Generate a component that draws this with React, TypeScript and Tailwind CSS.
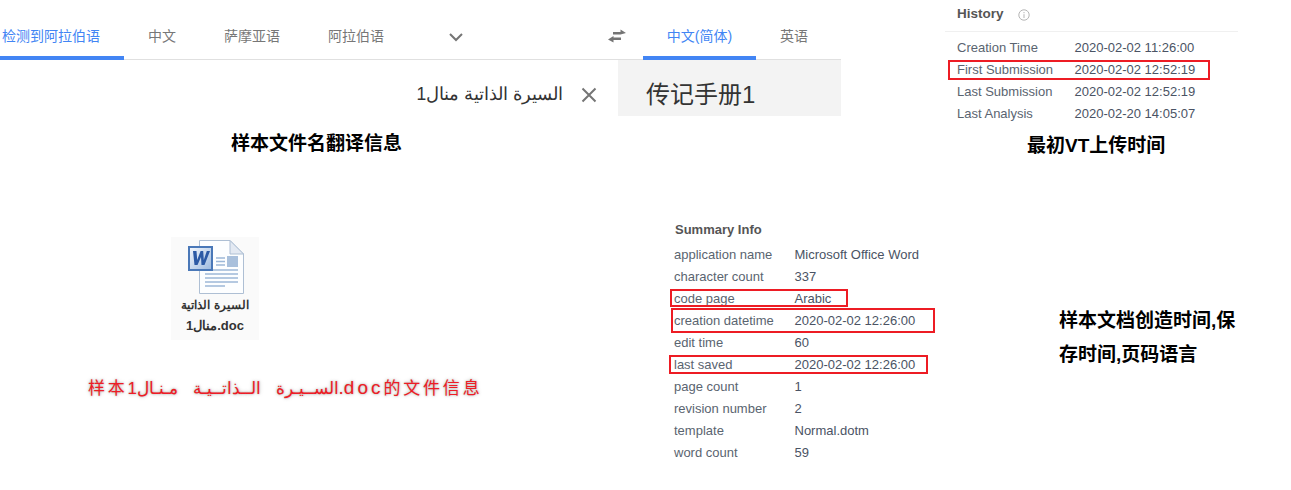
import React from 'react';

const arial = 'font-["Liberation_Sans","Noto_Sans_CJK_SC",sans-serif]';

const summaryRows: [string, string, number?][] = [
  ['application name', 'Microsoft Office Word'],
  ['character count', '337'],
  ['code page', 'Arabic', 1],
  ['creation datetime', '2020-02-02 12:26:00', 2],
  ['edit time', '60'],
  ['last saved', '2020-02-02 12:26:00', 3],
  ['page count', '1'],
  ['revision number', '2'],
  ['template', 'Normal.dotm'],
  ['word count', '59'],
];

const historyRows: [string, string, boolean?][] = [
  ['Creation Time', '2020-02-02 11:26:00'],
  ['First Submission', '2020-02-02 12:52:19', true],
  ['Last Submission', '2020-02-02 12:52:19'],
  ['Last Analysis', '2020-02-20 14:05:07'],
];

const WordIcon: React.FC = () => (
  <svg width="60" height="58" viewBox="0 0 60 58" className="ml-[3px] block">
    <defs>
      <linearGradient id="badge" x1="0" y1="0" x2="1" y2="1">
        <stop offset="0" stopColor="#f2f6fc" />
        <stop offset="1" stopColor="#9fbce0" />
      </linearGradient>
    </defs>
    <path d="M12.5 2.5H43L56.5 16V55.5H12.5Z" fill="#fdfeff" stroke="#aebfd4" />
    <path d="M43 2.5V16H56.5Z" fill="#e3e9f2" stroke="#aebfd4" />
    <rect x="40" y="18" width="11" height="11" fill="#a9c0dc" />
    <path d="M29 20H38M29 23.5H38M29 27H38M18 32H51M18 36H51M18 40H51M18 44H51M18 48H38" stroke="#9db8d8" strokeWidth="1.3" />
    <rect x="1" y="8" width="25" height="25" fill="#4a78b8" />
    <rect x="3" y="10" width="21" height="21" fill="url(#badge)" />
    <path d="M6 13L7.5 27H10.5L14 19L14.5 27H17.5L23 13H19.8L16.8 22L16.2 13H13.6L10.2 22L9.5 13Z" fill="#2c5aa5" />
  </svg>
);

const SwapIcon: React.FC = () => (
  <svg width="18" height="14" viewBox="0 0 18 14" fill="#757575" className="block">
    <path d="M5 3H12.5V0.5L18 4L12.5 5.5H5Z" />
    <path d="M13 8.5H5.5V7L0 10.5L5.5 13.5V11H13Z" />
  </svg>
);

const Tab: React.FC<{ label: string; className: string; active?: boolean }> = ({ label, className, active }) => (
  <div className={`flex h-[60px] items-center justify-center border-b-[4px] pt-[15px] text-sm ${className} ${active ? 'border-[#4285f4] text-[#4285f4]' : 'border-transparent text-[#777777]'}`}>
    {label}
  </div>
);

export default function App() {
  return (
    <div className={`flex h-[490px] w-[1291px] overflow-hidden bg-white ${arial}`}>
      <div className="w-[945px] shrink-0">
        <div className="w-[841px]">
          <div className="relative flex h-[60px] items-start">
            <div className="absolute inset-x-0 bottom-0 h-[1px] bg-[#e0e0e0]" />
            <Tab label="检测到阿拉伯语" className="relative w-[124px] pr-[22px]" active />
            <Tab label="中文" className="ml-[24px] w-[28px]" />
            <Tab label="萨摩亚语" className="ml-[48px] w-[56px]" />
            <Tab label="阿拉伯语" className="ml-[48px] w-[56px]" />
            <svg width="14" height="9" viewBox="0 0 14 9" className="ml-[65px] mt-[33px]">
              <path d="M1 1L7 7L13 1" fill="none" stroke="#757575" strokeWidth="2" />
            </svg>
            <div className="ml-[145px] mt-[29px]">
              <SwapIcon />
            </div>
            <Tab label="中文(简体)" className="relative ml-[17px] w-[113px]" active />
            <Tab label="英语" className="ml-[24px] w-[28px]" />
          </div>
          <div className="flex h-[56px]">
            <div className="flex w-[618px] items-center justify-end pt-[12px]">
              <span className="text-[17.5px] text-[#333333]">السيرة الذاتية منال1</span>
              <svg width="16" height="16" viewBox="0 0 16 16" className="ml-[18px] mr-[21px] mt-[1px]">
                <path d="M1.5 1.5L14.5 14.5M14.5 1.5L1.5 14.5" stroke="#757575" strokeWidth="2" />
              </svg>
            </div>
            <div className="flex-1 bg-[#f3f3f3] pl-[28px] pt-[16px] text-2xl leading-[38px] text-[#333333]">传记手册1</div>
          </div>
        </div>
        <div className="mt-[14px] pl-[231px] text-[19px] font-bold leading-[28px] text-black">样本文件名翻译信息</div>
        <div className="mt-[61px] flex">
          <div className="w-[674px] pt-[18px]">
            <div className="ml-[171px] flex h-[103px] w-[88px] flex-col items-center bg-[#fafafa] pt-[1px]">
              <WordIcon />
              <div className="mt-[2px] text-[11.5px] font-bold leading-[14px] text-[#333333]">السيرة الذاتية</div>
              <div className="mt-[7px] text-[13px] font-bold leading-[14px] text-[#333333]">منال1.doc</div>
            </div>
            <div className="ml-[88px] mt-[36px] whitespace-nowrap text-[17px] leading-[24px] tracking-[2.8px] text-[#ee1c25] [text-shadow:0_0_2px_#aaaaaa,0_0_4px_#cccccc]">
              样本<span className="[word-spacing:10px]">الســيـرة الــذاتــيـة مـنـال1</span><span className="text-[19px] tracking-[3px]">.doc</span>的文件信息
            </div>
          </div>
          <div>
            <div className="pl-[1px] text-[13px] font-bold leading-[22px] text-[#555555]">Summary Info</div>
            <div className="mt-[3px]">
              {summaryRows.map(([label, value, box]) => (
                <div key={label} className="relative flex h-[22px] items-center text-[13px] text-[#5a6470]">
                  {box === 1 && <div className="absolute left-[-4px] top-[1px] h-[18px] w-[178px] border-2 border-[#ed1c24]" />}
                  {box === 2 && <div className="absolute left-[-3px] top-[-2px] h-[25px] w-[264px] border-2 border-[#ed1c24]" />}
                  {box === 3 && <div className="absolute left-[-5px] top-[1px] h-[19px] w-[259px] border-2 border-[#ed1c24]" />}
                  <span className="w-[120.5px]">{label}</span>
                  <span className="text-[#4a5364]">{value}</span>
                </div>
              ))}
            </div>
          </div>
        </div>
      </div>
      <div className="flex-1">
        <div className="flex h-[32px] w-[293px] items-center border-b border-[#f0f0f0] pl-[12px] pb-[2px]">
          <span className="text-[13.5px] font-bold text-[#555555]">History</span>
          <svg width="12" height="12" viewBox="0 0 12 12" className="ml-[14px]">
            <circle cx="6" cy="6" r="5.2" fill="none" stroke="#b5b5b5" />
            <path d="M6 5.2V9M6 3V4.2" stroke="#b5b5b5" />
          </svg>
        </div>
        <div className="mt-[5px]">
          {historyRows.map(([label, value, box]) => (
            <div key={label} className="relative flex h-[22px] items-center pl-[12px] text-[13px] text-[#5a6470]">
              {box && <div className="absolute left-[3px] top-[1px] h-[20px] w-[262px] border-2 border-[#ed1c24]" />}
              <span className="w-[117.5px]">{label}</span>
              <span className="text-[#4a5364]">{value}</span>
            </div>
          ))}
        </div>
        <div className="mt-[7px] pl-[82px] text-[19px] font-bold leading-[28px] text-black">最初VT上传时间</div>
        <div className="mt-[144px] w-[182px] pl-[114px] text-[19px] font-bold leading-[34px] text-black">
          <div className="w-[180px] whitespace-nowrap">样本文档创造时间,保</div>
          <div className="w-[180px] whitespace-nowrap">存时间,页码语言</div>
        </div>
      </div>
    </div>
  );
}
